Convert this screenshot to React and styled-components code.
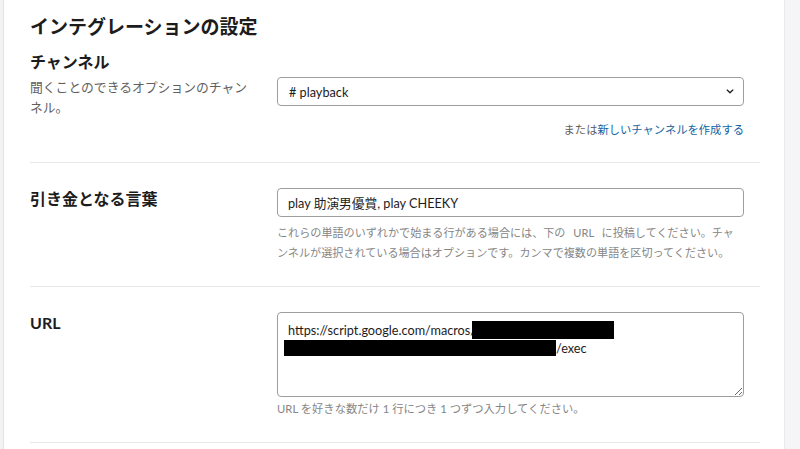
import React from 'react';
import styled, { createGlobalStyle } from 'styled-components';

const GlobalStyle = createGlobalStyle`
  html, body {
    margin: 0;
    padding: 0;
    background: #ffffff;
  }
  body {
    font-family: "Lato", "Noto Sans CJK JP", sans-serif;
    color: #1d1c1d;
  }
`;

const App = () => {
  return (
    <>
      <GlobalStyle />
      <Page>
        <LeftRail />
        <Main>
          <Title>インテグレーションの設定</Title>

          <Row $first>
            <LabelCol>
              <Heading>チャンネル</Heading>
              <Description>聞くことのできるオプションのチャンネル。</Description>
            </LabelCol>
            <ControlCol $offset={26}>
              <Select>
                <span># playback</span>
                <Chevron viewBox="0 0 10 6">
                  <path d="M1.5 1.2 L5 4.6 L8.5 1.2" fill="none" stroke="#1d1c1d" strokeWidth="1.6" strokeLinecap="round" strokeLinejoin="round" />
                </Chevron>
              </Select>
              <AltLine>
                または<Link href="#">新しいチャンネルを作成する</Link>
              </AltLine>
            </ControlCol>
          </Row>

          <Row>
            <LabelCol>
              <Heading>引き金となる言葉</Heading>
            </LabelCol>
            <ControlCol>
              <TextInput>play 助演男優賞, play CHEEKY</TextInput>
              <Help $spaced>
                これらの単語のいずれかで始まる行がある場合には、下の URL に投稿してください。チャンネルが選択されている場合はオプションです。カンマで複数の単語を区切ってください。
              </Help>
            </ControlCol>
          </Row>

          <Row>
            <LabelCol>
              <Heading>URL</Heading>
            </LabelCol>
            <ControlCol>
              <TextArea>
                <UrlLine>
                  https://script.google.com/macros/<Redacted $w={142} $h={18} $shift={-4} />
                </UrlLine>
                <UrlLine $flush>
                  <Redacted $w={272} $h={16} />/exec
                </UrlLine>
              </TextArea>
              <Help $tight>URL を好きな数だけ 1 行につき 1 つずつ入力してください。</Help>
            </ControlCol>
          </Row>
        </Main>
        <RightRail />
      </Page>
    </>
  );
};

const Page = styled.div`
  display: flex;
  width: 800px;
  height: 449px;
  overflow: hidden;
  background: #ffffff;
`;

const LeftRail = styled.div`
  flex: 0 0 3px;
  background: #f3f3f3;
  border-right: 1px solid #e3e3e3;
`;

const RightRail = styled.div`
  flex: 0 0 15px;
  background: #f5f4f6;
  border-left: 1px solid #ebe9ec;
`;

const Main = styled.div`
  flex: 1;
  padding: 13px 24px 0 26px;
`;

const Title = styled.h2`
  margin: 0;
  font-size: 19px;
  line-height: 28px;
  font-weight: 700;
  color: #1d1c1d;
`;

const Row = styled.section`
  display: grid;
  grid-template-columns: 224px 1fr;
  column-gap: 23px;
  padding: ${(p) => (p.$first ? '10px 16px 22px 0' : '25px 16px 23px 0')};
  border-bottom: 1px solid #e8e8e8;
`;

const LabelCol = styled.div`
  display: flex;
  flex-direction: column;
`;

const Heading = styled.h4`
  margin: 0;
  font-size: 16px;
  line-height: 22px;
  font-weight: 700;
  color: #1d1c1d;
`;

const Description = styled.p`
  margin: 4px 0 0;
  font-size: 12.8px;
  line-height: 20px;
  color: #616061;
`;

const ControlCol = styled.div`
  display: flex;
  flex-direction: column;
  padding-top: ${(p) => p.$offset || 0}px;
`;

const fieldBase = `
  box-sizing: border-box;
  width: 100%;
  border: 1px solid #9e9e9e;
  border-radius: 4px;
  background: #ffffff;
  font-size: 12.7px;
  color: #1d1c1d;
`;

const Select = styled.div`
  ${fieldBase}
  display: flex;
  align-items: center;
  justify-content: space-between;
  height: 29px;
  padding: 0 9px 0 11px;
`;

const Chevron = styled.svg`
  width: 8px;
  height: 5px;
`;

const AltLine = styled.div`
  margin-top: 14px;
  text-align: right;
  font-size: 11.3px;
  line-height: 20px;
  color: #616061;
`;

const Link = styled.a`
  color: #1264a3;
  text-decoration: none;
`;

const TextInput = styled.div`
  ${fieldBase}
  display: flex;
  align-items: center;
  height: 29px;
  padding: 0 10px;
`;

const Help = styled.p`
  margin: ${(p) => (p.$tight ? '2px' : '6px')} 0 0;
  font-size: ${(p) => (p.$spaced ? '11.1px' : '11.3px')};
  word-spacing: ${(p) => (p.$spaced ? '5px' : 'normal')};
  line-height: 20px;
  color: #868686;
`;

const TextArea = styled.div`
  ${fieldBase}
  height: 85px;
  padding: 8px 10px 0 6px;
  resize: both;
  overflow: hidden;
`;

const UrlLine = styled.div`
  display: flex;
  align-items: center;
  height: 18px;
  padding-left: ${(p) => (p.$flush ? 0 : 4)}px;
  line-height: 18px;
  white-space: nowrap;
`;

const Redacted = styled.span`
  display: inline-block;
  width: ${(p) => p.$w}px;
  height: ${(p) => p.$h}px;
  margin-left: ${(p) => p.$shift || 0}px;
  background: #000000;
`;

export default App;
